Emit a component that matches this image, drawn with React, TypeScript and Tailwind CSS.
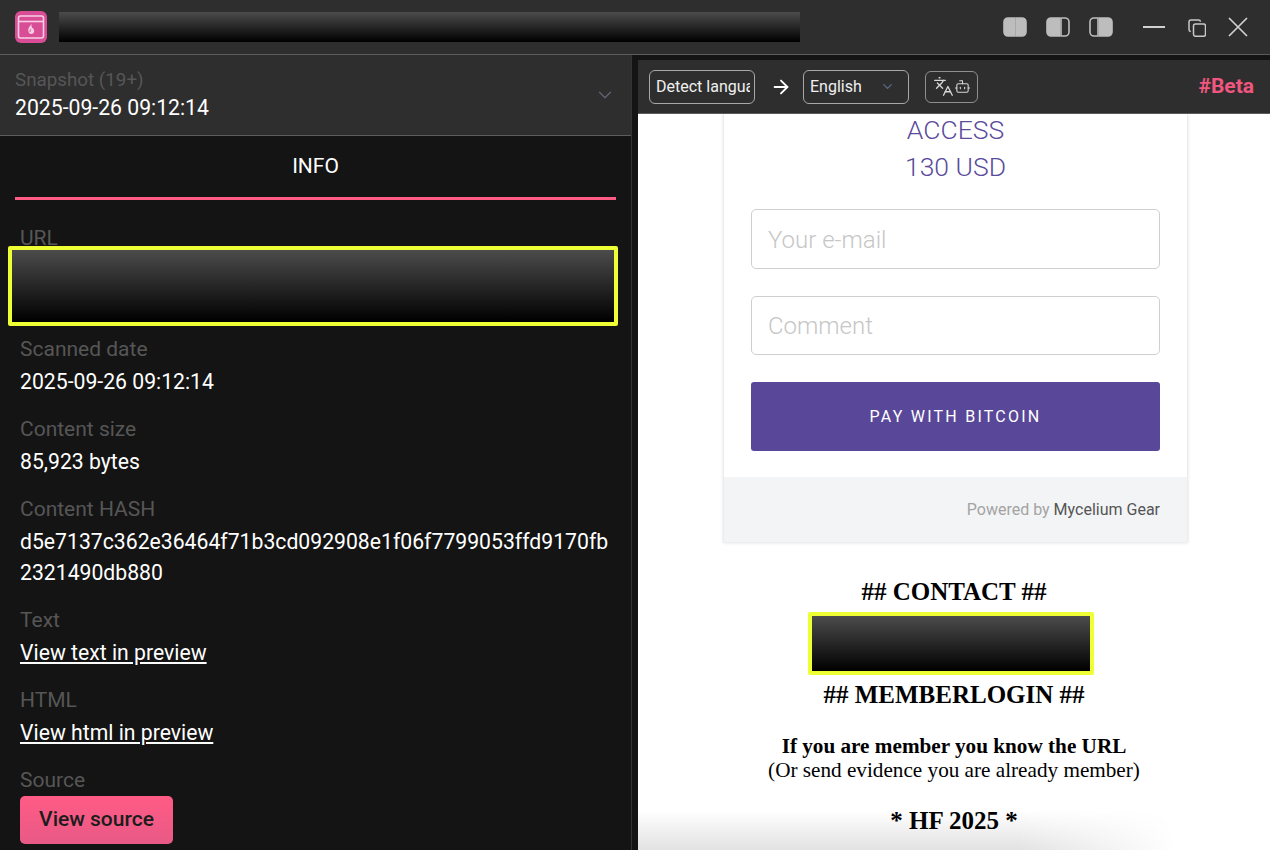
import { ChevronDown, ArrowRight, Languages, Bot } from 'lucide-react'

const roboto = 'font-["Roboto",sans-serif]'

const Redacted = ({ className }: { className: string }) => (
  <div className={`bg-linear-to-b/srgb from-[#4c4c4c] to-black ${className}`} />
)

const SplitIcon = ({ side }: { side: 'both' | 'left' | 'right' }) => {
  const leftEdge = side === 'both' ? 11.500 : side === 'left' ? 13.500 : 9
  return (
    <svg width="24" height="20" viewBox="0 0 24 20" fill="none">
      <path
        d={`M${leftEdge} 1H5a4 4 0 0 0-4 4v10a4 4 0 0 0 4 4h${leftEdge - 5}z`}
        fill={side === 'right' ? 'none' : '#bdbdbd'}
        stroke="#bdbdbd"
        strokeWidth="1.6"
      />
      <path
        d={`M${leftEdge + 1.500} 1H19a4 4 0 0 1 4 4v10a4 4 0 0 1-4 4H${leftEdge + 1.500}z`}
        fill={side === 'left' ? 'none' : '#bdbdbd'}
        stroke="#bdbdbd"
        strokeWidth="1.6"
      />
    </svg>
  )
}

const Logo = () => (
  <svg width="32" height="32" viewBox="0 0 32 32" fill="none">
    <rect width="32" height="32" rx="6" fill="#d94d96" />
    <rect x="3.500" y="5" width="25" height="22" rx="2" stroke="#f7cfe4" strokeWidth="1.6" />
    <path d="M3.500 10.500h25" stroke="#f7cfe4" strokeWidth="1.6" />
    <path
      d="M16.500 12.500c-.3 1.800-3.300 3.600-3.300 6.800 0 2.300 1.400 3.700 3 3.700s3-1.300 3-3.100c0-1.500-1.100-2.300-2-3.100-.7-.8-.9-2.300-.7-4.300z"
      fill="#f7cfe4"
    />
    <path d="M15.700 18.500c-.6.700-.8 1.300-.7 2.100" stroke="#d94d96" strokeWidth="1" strokeLinecap="round" />
  </svg>
)

const Field = ({ label, children }: { label: string; children: React.ReactNode }) => (
  <div className="mb-[16px]">
    <div className="h-[32px] text-[21px] leading-[32px] text-[#565656]">{label}</div>
    {children}
  </div>
)

const Value = ({ children }: { children: string }) => (
  <div className="h-[32px] pt-[1px] text-[21.200px] leading-[32px] text-white">{children}</div>
)

const PreviewLink = ({ children }: { children: string }) => (
  <div className="h-[32px] pt-[1px] text-[21.200px] leading-[32px]">
    <a className="text-white underline underline-offset-2">{children}</a>
  </div>
)

export default function App() {
  return (
    <div className={`flex h-[850px] w-[1270px] flex-col overflow-hidden bg-[#141414] ${roboto}`}>
      {/* title bar */}
      <div className="flex h-[55px] shrink-0 items-center border-b border-[#5c5c5c] bg-[#2e2e2e] pl-[15px] pr-[22px]">
        <Logo />
        <Redacted className="ml-[12px] h-[30px] w-[741px]" />
        <div className="ml-auto flex items-center">
          <div className="flex items-center gap-[19px]">
            <SplitIcon side="both" />
            <SplitIcon side="left" />
            <SplitIcon side="right" />
          </div>
          <div className="ml-[30px] h-[2px] w-[22px] bg-[#d0d0d0]" />
          <svg className="ml-[23px] mt-[2px]" width="18" height="18" viewBox="0 0 18 18" fill="none" stroke="#c8c8c8" strokeWidth="1.500">
            <rect x="5.500" y="5" width="12" height="12.300" rx="2" />
            <path d="M2.800 12.500A2 2 0 0 1 1 10.500V3a2 2 0 0 1 2-2h7.500a2 2 0 0 1 2 1.800" />
          </svg>
          <svg className="ml-[22px]" width="20" height="20" viewBox="0 0 20 20" fill="none" stroke="#d0d0d0" strokeWidth="1.700">
            <path d="M1 1l18 18M19 1L1 19" />
          </svg>
        </div>
      </div>

      <div className="flex min-h-0 flex-1">
        {/* left column */}
        <div className="w-[632px] shrink-0 border-r border-[#333] bg-[#141414]">
          <div className="flex h-[81px] items-center justify-between border-b border-[#5c5c5c] bg-[#2e2e2e] pl-[15px] pr-[15px]">
            <div>
              <div className="text-[18.800px] leading-[25px] text-[#565656]">Snapshot (19+)</div>
              <div className="text-[21.200px] leading-[30px] text-white">2025-09-26 09:12:14</div>
            </div>
            <ChevronDown className="text-[#5f6470]" size={22} strokeWidth={1.5} />
          </div>

          <div className="mx-[15px] flex h-[64px] items-center justify-center border-b-[3px] border-[#ff5b85] text-[21px] text-white">
            INFO
          </div>

          <div className="pl-[20px] pt-[22px]">
            <div className="h-[24px] text-[21px] leading-[32px] text-[#565656]">URL</div>
            <Redacted className="-ml-[12px] box-border h-[80px] w-[610px] rounded-[2px] border-[4px] border-[#eeff33]" />
            <div className="mt-[7px]">
              <Field label="Scanned date">
                <Value>2025-09-26 09:12:14</Value>
              </Field>
              <Field label="Content size">
                <Value>85,923 bytes</Value>
              </Field>
              <Field label="Content HASH">
                <div className="w-[595px] break-all pt-[1px] text-[21.200px] leading-[31px] text-white">
                  d5e7137c362e36464f71b3cd092908e1f06f7799053ffd9170fb2321490db880
                </div>
              </Field>
              <Field label="Text">
                <PreviewLink>View text in preview</PreviewLink>
              </Field>
              <Field label="HTML">
                <PreviewLink>View html in preview</PreviewLink>
              </Field>
              <div className="h-[32px] text-[21px] leading-[32px] text-[#565656]">Source</div>
              <button className="flex h-[48px] w-[153px] items-center justify-center rounded-[5px] bg-linear-to-b/srgb from-[#ff5b85] to-[#e85a86] text-[21px] font-medium text-[#1c1c1c]">
                View source
              </button>
            </div>
          </div>
        </div>

        {/* right column */}
        <div className="ml-[6px] mt-[5px] flex min-w-0 flex-1 flex-col overflow-hidden">
          <div className="flex h-[54px] shrink-0 items-center border-b border-[#5c5c5c] bg-[#2e2e2e] pl-[11px] pr-[16px]">
            <div className="flex h-[34px] w-[106px] items-center overflow-hidden rounded-[6px] border border-[#a8a8a8] pl-[6px] text-[16px] whitespace-nowrap text-[#f0f0f0]">
              <span className="block w-[94px] overflow-hidden">Detect language</span>
            </div>
            <ArrowRight className="ml-[15px] text-white" size={22} strokeWidth={2} />
            <div className="ml-[11px] flex h-[34px] w-[106px] items-center rounded-[6px] border border-[#a8a8a8] pl-[6px] text-[16px] text-[#f0f0f0]">
              English
              <ChevronDown className="ml-[18px] text-[#5b6b8c]" size={15} strokeWidth={2} />
            </div>
            <div className="ml-[16px] flex h-[32px] w-[53px] items-center justify-center rounded-[6px] border border-[#8f8f8f] text-[#d8d8d8]">
              <Languages size={21} strokeWidth={1.5} />
              <Bot size={17} strokeWidth={1.5} />
            </div>
            <div className="ml-auto text-[21px] font-bold text-[#f0567f]">#Beta</div>
          </div>

          <div className="relative flex min-h-0 flex-1 flex-col items-center bg-white">
            {/* bottom fade, under the page text */}
            <div className="pointer-events-none absolute inset-x-0 bottom-0 h-[40px] bg-linear-to-b/srgb from-white to-[#e2e2e2] [mask-image:linear-gradient(to_right,black_60%,transparent_85%)]" />

            <div className="ml-[3px] w-[465px] shrink-0 border-x border-[#ececec] bg-white shadow-[0_1px_3px_rgba(0,0,0,0.12)]">
              <div className="px-[27px] pb-[26px]">
                <div className="-mt-[3px] text-center text-[26.500px] leading-[37px] font-light text-[#5a4b9b]">
                  <div>ACCESS</div>
                  <div>130 USD</div>
                </div>
                <div className="mt-[24px] flex h-[60px] items-center rounded-[5px] border border-[#cfcfcf] px-[16px] pt-[1px] text-[24px] font-light text-[#c6c6c6]">
                  Your e-mail
                </div>
                <div className="mt-[27px] flex h-[59px] items-center rounded-[5px] border border-[#cfcfcf] px-[16px] text-[24px] font-light text-[#c6c6c6]">
                  Comment
                </div>
                <div className="mt-[27px] flex h-[69px] items-center justify-center rounded-[3px] bg-[#594899] text-[16px] tracking-[0.14em] text-white">
                  PAY WITH BITCOIN
                </div>
              </div>
              <div className="flex h-[65px] items-center justify-end bg-[#f3f4f6] px-[27px] text-[16px] text-[#a3a3a3]">
                Powered by&nbsp;<span className="text-[#555]">Mycelium Gear</span>
              </div>
            </div>

            <div className='relative mt-[34px] flex flex-col items-center font-["Liberation_Serif",serif] text-black'>
              <div className="text-[25px] leading-[32px] font-bold">## CONTACT ##</div>
              <Redacted className="mr-[6px] mt-[4px] box-border h-[63px] w-[286px] rounded-[2px] border-[4px] border-[#eeff33]" />
              <div className="mt-[4px] text-[25px] leading-[32px] font-bold">## MEMBERLOGIN ##</div>
              <div className="mt-[23px] text-[21.200px] leading-[24px] font-bold">If you are member you know the URL</div>
              <div className="text-[21.200px] leading-[25px]">(Or send evidence you are already member)</div>
              <div className="mt-[22px] text-[25px] leading-[32px] font-bold">* HF 2025 *</div>
            </div>
          </div>
        </div>
      </div>
    </div>
  )
}
